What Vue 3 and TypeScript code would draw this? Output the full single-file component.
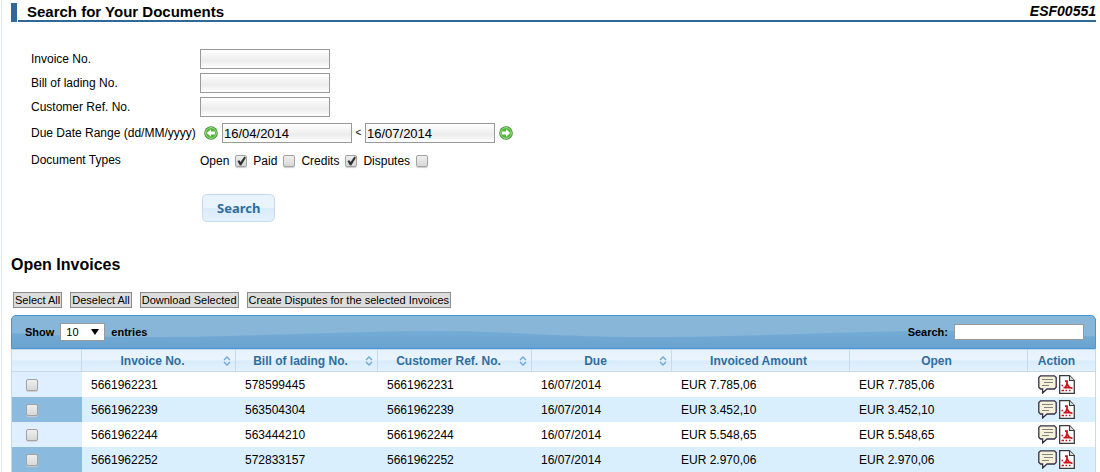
<script setup lang="ts">
import { ref } from 'vue'

interface Invoice {
  no: string
  lading: string
  ref: string
  due: string
  amount: string
  open: string
  selected: boolean
}

const fields = [
  { id: 'invoice', label: 'Invoice No.' },
  { id: 'lading', label: 'Bill of lading No.' },
  { id: 'customer', label: 'Customer Ref. No.' },
]
const fieldValues = ref<Record<string, string>>({ invoice: '', lading: '', customer: '' })
const from = ref('16/04/2014')
const to = ref('16/07/2014')
const types = ref([
  { id: 'open', label: 'Open', on: true },
  { id: 'paid', label: 'Paid', on: false },
  { id: 'credits', label: 'Credits', on: true },
  { id: 'disputes', label: 'Disputes', on: false },
])
const pageSize = ref('10')
const filter = ref('')

const columns = [
  { label: 'Invoice No.', sortable: true },
  { label: 'Bill of lading No.', sortable: true },
  { label: 'Customer Ref. No.', sortable: true },
  { label: 'Due', sortable: true },
  { label: 'Invoiced Amount', sortable: false },
  { label: 'Open', sortable: false },
]
const invoices = ref<Invoice[]>([
  { no: '5661962231', lading: '578599445', ref: '5661962231', due: '16/07/2014', amount: 'EUR 7.785,06', open: 'EUR 7.785,06', selected: false },
  { no: '5661962239', lading: '563504304', ref: '5661962239', due: '16/07/2014', amount: 'EUR 3.452,10', open: 'EUR 3.452,10', selected: false },
  { no: '5661962244', lading: '563444210', ref: '5661962244', due: '16/07/2014', amount: 'EUR 5.548,65', open: 'EUR 5.548,65', selected: false },
  { no: '5661962252', lading: '572833157', ref: '5661962252', due: '16/07/2014', amount: 'EUR 2.970,06', open: 'EUR 2.970,06', selected: false },
])

function setAll(value: boolean) {
  invoices.value.forEach((row) => (row.selected = value))
}
</script>

<template>
  <main class="page">
    <header class="title-bar">
      <div class="title-line">
        <h1>Search for Your Documents</h1>
        <span class="code">ESF00551</span>
      </div>
    </header>

    <form class="search-form" @submit.prevent>
      <div v-for="f in fields" :key="f.id" class="field">
        <label :for="f.id">{{ f.label }}</label>
        <input :id="f.id" v-model="fieldValues[f.id]" class="text" type="text" />
      </div>
      <div class="field dates">
        <label for="from">Due Date Range (dd/MM/yyyy)</label>
        <div class="range">
          <button type="button" class="arrow" aria-label="Earlier">
            <svg viewBox="0 0 14 14" width="14" height="14">
              <circle cx="7" cy="7" r="6.8" fill="#3c9130" />
              <circle cx="7" cy="7" r="5.4" fill="#55b53d" stroke="#a5dc92" stroke-width="1" />
              <path d="M2.8 7 L7 3.2 V5.5 H11 V8.5 H7 V10.8 Z" fill="#fff" />
            </svg>
          </button>
          <input id="from" v-model="from" class="text date" type="text" />
          <span class="less">&lt;</span>
          <input v-model="to" class="text date" type="text" aria-label="End date" />
          <button type="button" class="arrow" aria-label="Later">
            <svg viewBox="0 0 14 14" width="14" height="14">
              <circle cx="7" cy="7" r="6.8" fill="#3c9130" />
              <circle cx="7" cy="7" r="5.4" fill="#55b53d" stroke="#a5dc92" stroke-width="1" />
              <path d="M11.2 7 L7 3.2 V5.5 H3 V8.5 H7 V10.8 Z" fill="#fff" />
            </svg>
          </button>
        </div>
      </div>
      <div class="field types">
        <span class="caption">Document Types</span>
        <div class="checks">
          <label v-for="t in types" :key="t.id">
            {{ t.label }}<input v-model="t.on" type="checkbox" class="tick" />
          </label>
        </div>
      </div>
      <button type="submit" class="search">Search</button>
    </form>

    <h2>Open Invoices</h2>
    <div class="actions">
      <button type="button" @click="setAll(true)">Select All</button>
      <button type="button" @click="setAll(false)">Deselect All</button>
      <button type="button">Download Selected</button>
      <button type="button">Create Disputes for the selected Invoices</button>
    </div>

    <section class="grid">
      <div class="toolbar">
        <svg class="wave" width="100%" height="32" aria-hidden="true">
          <defs>
            <linearGradient id="deep" x1="0" y1="0" x2="0" y2="1">
              <stop offset="0" stop-color="#75acd5" />
              <stop offset="1" stop-color="#6aa2d0" />
            </linearGradient>
            <pattern id="gloss" width="500" height="32" patternUnits="userSpaceOnUse">
              <path d="M0 17 C60 20 90 21 145 21 C240 21 330 15 420 15 C460 15 480 16 500 17 V32 H0 Z" fill="url(#deep)" />
            </pattern>
          </defs>
          <rect width="100%" height="32" fill="url(#gloss)" />
        </svg>
        <label class="length">
          Show
          <span class="select">
            <select v-model="pageSize">
              <option>10</option>
              <option>25</option>
              <option>50</option>
            </select>
          </span>
          entries
        </label>
        <label class="filter">Search: <input v-model="filter" type="text" /></label>
      </div>
      <table>
        <colgroup>
          <col class="c-check" />
          <col class="c-wide" />
          <col class="c-lading" />
          <col class="c-wide" />
          <col class="c-due" />
          <col />
          <col />
          <col class="c-action" />
        </colgroup>
        <thead>
          <tr>
            <th aria-label="Selected"></th>
            <th v-for="c in columns" :key="c.label">
              <div class="head">
                <span>{{ c.label }}</span>
                <svg v-if="c.sortable" width="8" height="10" viewBox="0 0 8 10">
                  <path d="M1 4 L4 1 L7 4 M1 6 L4 9 L7 6" fill="none" stroke="#6da8d5" stroke-width="1.4" />
                </svg>
              </div>
            </th>
            <th class="action-head">Action</th>
          </tr>
        </thead>
        <tbody>
          <tr v-for="row in invoices" :key="row.no">
            <td class="check"><input v-model="row.selected" type="checkbox" class="tick" :aria-label="'Select ' + row.no" /></td>
            <td>{{ row.no }}</td>
            <td>{{ row.lading }}</td>
            <td>{{ row.ref }}</td>
            <td>{{ row.due }}</td>
            <td>{{ row.amount }}</td>
            <td>{{ row.open }}</td>
            <td class="action">
              <div class="icons">
                <button type="button" aria-label="Dispute">
                  <svg width="19" height="19" viewBox="0 0 19 19">
                    <path d="M2.5 .8 H16.5 L18.2 2.5 V12.3 L16.5 14 H9 L4.6 18 V14 H2.5 L.8 12.3 V2.5 Z" fill="#f5f0d8" stroke="#35304a" stroke-width="1.3" />
                    <path d="M4 4.5 H15 M6 7.5 H15 M4 10.5 H11" stroke="#85827f" stroke-width="1" />
                  </svg>
                </button>
                <button type="button" aria-label="PDF">
                  <svg width="16" height="19" viewBox="0 0 16 19">
                    <path d="M.7 .7 H10.5 L15.3 5.5 V18.3 H.7 Z" fill="#fff" stroke="#3a3a3a" stroke-width="1.3" />
                    <path d="M10.5 .7 V5.5 H15.3" fill="#ddd" stroke="#3a3a3a" stroke-width="1.1" />
                    <path d="M6 6.2 H8 V9 L10 12 L13.5 13.5 M8 9 L6.5 12.5 M4.5 12.6 H11" fill="none" stroke="#c8141b" stroke-width="1.8" />
                    <path d="M2.5 10.5 h1.5 M2.5 15.5 h2.5 M6.5 15.5 h1.5 M10 15.5 h1.5" stroke="#c8141b" stroke-width="1.6" />
                  </svg>
                </button>
              </div>
            </td>
          </tr>
        </tbody>
      </table>
    </section>
  </main>
</template>

<style>
body {
  margin: 0;
  background: #fff;
}
</style>

<style scoped>
* {
  box-sizing: border-box;
}
.page {
  margin-left: 1px;
  border-left: 1px solid #e1eaf3;
  padding: 3px 4px 0 9px;
  font: 12px/16px "Liberation Sans", Arial, sans-serif;
  color: #000;
}
button,
input,
select {
  font: inherit;
  color: inherit;
  margin: 0;
}
.title-bar {
  border-left: 6px solid #2f6899;
  padding-left: 1px;
}
.title-line {
  display: flex;
  justify-content: space-between;
  height: 19px;
  border-bottom: 2px solid #2f6899;
  padding-left: 9px;
  font-size: 14px;
  line-height: 17px;
}
h1 {
  margin: 0;
  font-size: 15px;
  line-height: 17px;
}
.code {
  font-weight: bold;
  font-style: italic;
}
.search-form {
  padding: 27px 0 0 20px;
}
.field {
  display: flex;
  align-items: center;
  height: 20px;
  margin-bottom: 4px;
}
.field > label,
.caption {
  width: 169px;
  white-space: nowrap;
}
.text {
  width: 130px;
  height: 20px;
  padding: 0 2px;
  border: 1px solid #999;
  background: linear-gradient(#fff, #ececec 60%, #fff);
}
.dates {
  margin: 6px 0 7px;
}
.range {
  display: flex;
  align-items: center;
  padding-left: 4px;
}
.range .date {
  padding: 0 1px;
  font-size: 13px;
}
.arrow {
  display: flex;
  width: 14px;
  height: 14px;
  padding: 0;
  border: 0;
  background: none;
}
.arrow:first-child {
  margin-right: 4px;
}
.arrow:last-child {
  margin-left: 4px;
}
.less {
  width: 13px;
  font-size: 10px;
  line-height: 20px;
  text-align: center;
}
.checks {
  display: flex;
  gap: 6px;
  padding-top: 2px;
}
.checks label {
  display: flex;
  align-items: center;
  gap: 6px;
}
.tick {
  appearance: none;
  display: block;
  width: 12px;
  height: 12px;
  border: 1px solid #a3a3a3;
  border-radius: 2px;
  background: linear-gradient(#eee, #d8d8d8);
  box-shadow: 0 1px 1px #ccc;
}
.tick:checked::after {
  content: "";
  display: block;
  height: 10px;
  background: #333;
  clip-path: polygon(10% 50%, 30% 42%, 42% 60%, 80% 5%, 96% 18%, 48% 96%, 34% 92%);
}
.search {
  display: block;
  height: 28px;
  margin: 24px 0 0 171px;
  padding: 0 14px;
  border: 1px solid #c5dbec;
  border-radius: 5px;
  background: linear-gradient(#e8f3fd, #eaf4fd 48%, #d9ebfb 52%, #e3f1fd);
  color: #2e6e9e;
  font: bold 13px/24px "Noto Sans", "Open Sans", sans-serif;
}
h2 {
  margin: 33px 0 0;
  font-size: 16px;
  line-height: 20px;
}
.actions {
  display: flex;
  gap: 8px;
  margin: 17px 0 7px 2px;
}
.actions button {
  height: 16px;
  padding: 0 1px;
  border: 1px solid #8c8c8c;
  background: #ddd;
  font-size: 11px;
  line-height: 14px;
}
.toolbar {
  position: relative;
  display: flex;
  justify-content: space-between;
  align-items: center;
  height: 34px;
  padding: 0 11px 1px 13px;
  border: 1px solid #4297d7;
  border-radius: 5px 5px 0 0;
  background: #87b6d9;
  font-size: 11px;
  font-weight: bold;
  overflow: hidden;
}
.wave {
  position: absolute;
  inset: 0;
}
.length,
.filter {
  position: relative;
  display: flex;
  align-items: center;
  gap: 6px;
}
.select {
  position: relative;
  display: block;
}
.select::after {
  content: "";
  position: absolute;
  right: 6px;
  top: 6px;
  border: 4px solid transparent;
  border-top: 6px solid #000;
  border-bottom: 0;
  pointer-events: none;
}
select {
  appearance: none;
  display: block;
  width: 45px;
  height: 18px;
  padding: 0 5px;
  border: 1px solid #999;
  border-radius: 0;
  background: #fff;
  font-weight: normal;
}
.filter input {
  width: 130px;
  height: 16px;
  padding: 0 2px;
  border: 1px solid #999;
  background: #fff;
  font-weight: normal;
}
table {
  width: 100%;
  table-layout: fixed;
  border-collapse: separate;
  border-spacing: 0;
  border: 1px solid #c5dbec;
  border-bottom: 0;
}
.c-check {
  width: 70px;
}
.c-wide {
  width: 154px;
}
.c-lading {
  width: 142px;
}
.c-due {
  width: 140px;
}
.c-action {
  width: 67px;
}
th {
  height: 22px;
  padding: 0;
  border-right: 1px solid #c5dbec;
  border-bottom: 1px solid #c5dbec;
  background: linear-gradient(#e6f2fc, #eaf4fd 48%, #d9ebfb 52%, #e3f1fd);
  color: #2e6e9e;
}
th:last-child {
  border-right: 0;
  padding-right: 10px;
}
.head {
  display: flex;
  align-items: center;
  padding-right: 4px;
}
.head span {
  flex: 1;
}
td {
  height: 25px;
  padding: 0 9px;
}
tr:nth-child(even) td {
  background: #d9effe;
}
tr td.check {
  padding-left: 14px;
  background: #e0efff;
}
tr:nth-child(even) td.check {
  background: #8abade;
}
tr td.action {
  padding: 0 10px;
}
.icons {
  display: flex;
  gap: 2px;
}
.icons button {
  display: block;
  padding: 0;
  border: 0;
  background: none;
}
.icons svg {
  display: block;
}
</style>
